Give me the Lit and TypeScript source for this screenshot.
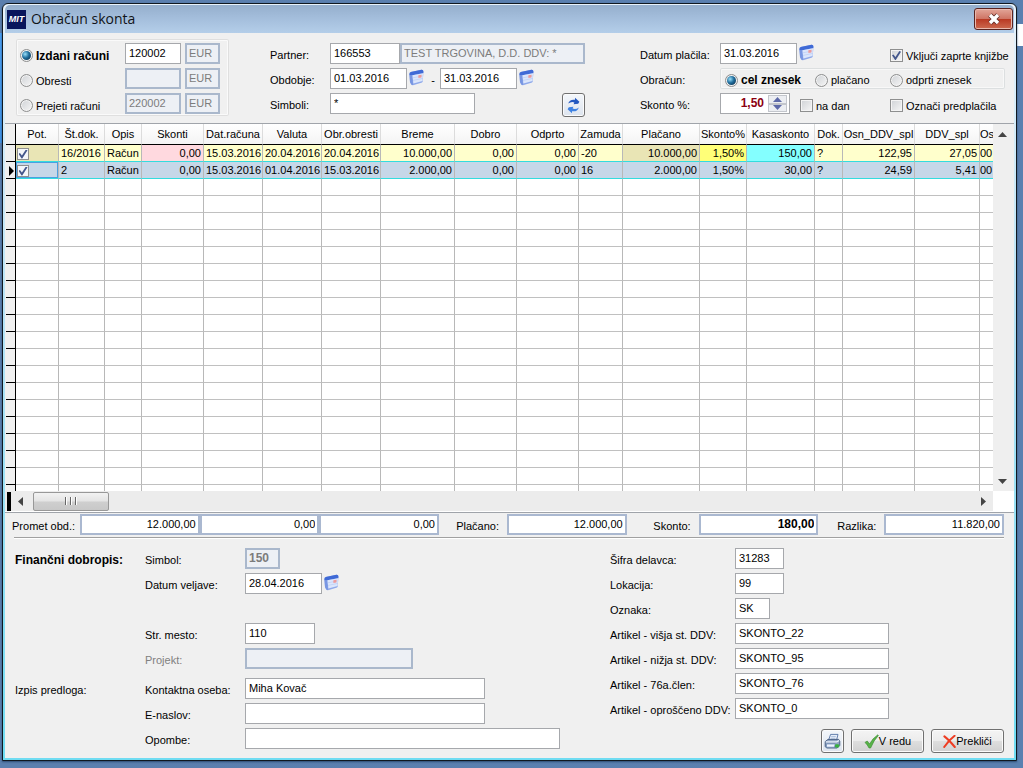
import { LitElement, html, svg, css, nothing } from "lit";
import { customElement, state } from "lit/decorators.js";
import { classMap } from "lit/directives/class-map.js";

type Align = "left" | "right";
interface Column {
  title: string;
  width: number;
  align: Align;
}
interface Entry {
  checked: boolean;
  cells: string[];
}

const COLUMNS: Column[] = [
  { title: "Št.dok.", width: 46, align: "left" },
  { title: "Opis", width: 37, align: "left" },
  { title: "Skonti", width: 62, align: "right" },
  { title: "Dat.računa", width: 59, align: "left" },
  { title: "Valuta", width: 59, align: "left" },
  { title: "Obr.obresti", width: 59, align: "left" },
  { title: "Breme", width: 74, align: "right" },
  { title: "Dobro", width: 62, align: "right" },
  { title: "Odprto", width: 62, align: "right" },
  { title: "Zamuda", width: 44, align: "left" },
  { title: "Plačano", width: 77, align: "right" },
  { title: "Skonto%", width: 47, align: "right" },
  { title: "Kasaskonto", width: 68, align: "right" },
  { title: "Dok.", width: 28, align: "left" },
  { title: "Osn_DDV_spl", width: 72, align: "right" },
  { title: "DDV_spl", width: 65, align: "right" },
];

const ENTRIES: Entry[] = [
  {
    checked: true,
    cells: ["16/2016", "Račun", "0,00", "15.03.2016", "20.04.2016", "20.04.2016", "10.000,00", "0,00", "0,00", "-20", "10.000,00", "1,50%", "150,00", "?", "122,95", "27,05", "00"],
  },
  {
    checked: true,
    cells: ["2", "Račun", "0,00", "15.03.2016", "01.04.2016", "15.03.2016", "2.000,00", "0,00", "0,00", "16", "2.000,00", "1,50%", "30,00", "?", "24,59", "5,41", "00"],
  },
];

const EMPTY_ROWS = 19;

const calendarIcon = html`<svg class="cal" viewBox="0 0 17 17" width="17" height="17" aria-hidden="true">
  <path d="M1.4 4.6 Q1.4 3.4 2.6 3.1 L13.4 .8 Q15.4 .6 15.4 2.6 L14.8 12.2 Q14.6 13.4 13.4 13.8 L5 16.2 Q3.6 16.4 3 15 L2 13Z" fill="#8fa9ea" />
  <path d="M1.4 5.6 Q1.4 3.6 2.8 3.1 L13.4 .8 Q15.4 .6 15.4 2.6 L15.3 4 L4.4 6.2 L1.6 6.6Z" fill="#3f6ad6" />
  <path d="M1.5 6.4 L4.2 6 L5 16.1 Q3.6 16.2 3 15 L2 13Z" fill="#7896e2" />
  <path d="M4.4 6.3 L15.2 4.2 L14.6 12 L5.4 14.4Z" fill="#dbe6fc" />
  <path d="M4.8 8.8 L15 6.8 M5 11.4 L14.8 9.4" stroke="#b4c8f4" stroke-width=".6" />
  <path d="M10.4 6.3 L13.6 5.7 L13.4 8.5 L10.4 9.1Z" fill="#ee9a9a" />
</svg>`;

const refreshIcon = svg`<svg viewBox="0 0 17 17" width="17" height="17" aria-hidden="true">
  <path d="M3.2 6.6 Q4.6 2 10 2.8 L10 .8 L14.4 4.8 L13.2 6.8 L8.6 7.2 L9.4 5.4 Q6 4.4 3.2 6.6Z" fill="#2358c0" />
  <path d="M13.8 10.4 Q12.4 15 7 14.2 L7 16.2 L2.6 12.2 L3.8 10.2 L8.4 9.8 L7.6 11.6 Q11 12.600 13.800 10.400Z" fill="#3f82e2" />
</svg>`;

const printerIcon = svg`<svg viewBox="0 0 17 17" width="17" height="17" aria-hidden="true">
  <path d="M4.6 7 L6.6 1.4 L14 1.4 L12.6 7Z" fill="#e8effa" stroke="#5573a4" stroke-width=".9" />
  <path d="M7.2 3.5 H11.8 M6.7 5.2 H11.2" stroke="#9ab2d4" stroke-width=".7" />
  <path d="M1.2 8.6 L4 6.4 H14.6 L15.8 8 V12.4 L13.2 15 H2.6 L1.2 13.4Z" fill="#8fa3c0" stroke="#42597e" stroke-width=".9" />
  <path d="M1.8 8.8 H12.8 L15.2 7.4" fill="none" stroke="#e9f0fa" stroke-width="1.2" />
  <path d="M2.6 11 H11.2 L10.4 14.2 H2.4Z" fill="#eef4ff" stroke="#5b7ba8" stroke-width=".6" />
  <rect x="11" y="11.2" width="4.2" height="3.2" rx="1.2" fill="#38b040" />
</svg>`;

const checkIcon = svg`<svg viewBox="0 0 15 15" width="15" height="15" aria-hidden="true">
  <path d="M1 8.4 L3.2 7 L5.6 10 Q8.4 4.4 13.8 .8 L14.4 1.4 Q9.6 6.6 6.6 14 L5 14 Q3.4 10.6 1 8.4Z" fill="#58b348" stroke="#3b8a31" stroke-width=".6" />
</svg>`;

const crossIcon = svg`<svg viewBox="0 0 13 13" width="13" height="13" aria-hidden="true">
  <path d="M1.4 1.4 Q6 5 11.8 12 M11.6 .8 Q5.6 5.4 1.2 12" fill="none" stroke="#ee3c22" stroke-width="2" stroke-linecap="round" />
</svg>`;

@customElement("app-root")
export class AppRoot extends LitElement {
  @state() private entries = ENTRIES;
  @state() private current = 1;

  static styles = css`
    * {
      box-sizing: border-box;
    }
    :host {
      display: flex;
      height: 100vh;
      min-height: 620px;
      padding: 3px 6px 7px 2px;
      box-sizing: border-box;
      font: 11px/13px "Liberation Sans", Arial, sans-serif;
      color: #000;
      background:
        linear-gradient(#fff, #fff) right 24px / 6px 22px no-repeat,
        linear-gradient(#4aa0f4, #3f92e6) 0 33px / 2px 110px no-repeat,
        linear-gradient(90deg, #5b7fae, #5a80b0);
    }
    input, button {
      font: inherit;
      color: inherit;
      margin: 0;
    }
    .window {
      flex: 1;
      min-width: 0;
      display: flex;
      flex-direction: column;
      border: 1px solid #101820;
      border-radius: 6px 6px 0 0;
      padding: 1px 2px 2px;
      background: linear-gradient(#e8f2fb, #b9e4f6 40%, #6fdcf2);
      box-shadow: 0 1px 2px #2d4c74;
    }
    .titlebar {
      display: flex;
      align-items: center;
      height: 28px;
      padding: 0 1px 0 2px;
      border-radius: 5px 5px 0 0;
      background: linear-gradient(#95afcd, #a3bddb 45%, #b4cee9);
    }
    .logo {
      width: 19px;
      height: 19px;
      background: #08155c;
      color: #fff;
      font: italic bold 9px/19px "Liberation Sans", sans-serif;
      text-align: center;
    }
    .title {
      flex: 1;
      margin: 0 0 0 5px;
      font: 14px/20px "Open Sans", "Noto Sans", sans-serif;
      color: #101418;
    }
    .close {
      display: grid;
      place-items: center;
      width: 39px;
      height: 22px;
      padding: 0;
      border: 1px solid #5b2420;
      border-radius: 3px;
      background: linear-gradient(#e2a598, #cf7565 48%, #b93a24 52%, #cd6a50);
      box-shadow: inset 0 0 0 1px #e9b9ae;
    }
    .body {
      flex: 1;
      min-height: 0;
      display: flex;
      flex-direction: column;
      background: #f0f0f0;
    }

    .filters {
      display: grid;
      grid-template-columns: 213px 1fr 374px;
      padding: 6px 0 7px 11px;
    }
    .stack {
      display: flex;
      flex-direction: column;
      gap: 4px;
      padding: 4px 0 2px;
    }
    .stack.middle {
      padding-left: 41px;
    }
    .stack.boxed {
      padding-left: 4px;
      box-shadow: inset 0 0 0 1px #dfdfdf, inset 0 0 0 2px #fafafa;
      border-radius: 2px;
    }
    .row {
      display: flex;
      height: 21px;
    }
    .accounts {
      display: grid;
      grid-template-columns: 105px 56px 35px;
      column-gap: 0;
    }
    .accounts input:last-child {
      margin-left: 4px;
      width: 35px;
    }
    .label {
      padding-top: 6px;
      white-space: nowrap;
    }
    .middle .label {
      width: 60px;
    }
    .right .label {
      width: 80px;
    }
    .muted {
      color: #808080;
    }
    .strong {
      font-weight: bold;
      font-size: 12px;
    }
    .field {
      width: 100%;
      height: 21px;
      padding: 0 3px 1px;
      border: 1px solid #a6a8ac;
      border-radius: 0;
      background: #fff;
      outline: none;
      min-width: 0;
    }
    .field:disabled {
      border: 2px solid #aab8cc;
      padding: 0 2px 1px;
      background: #edf0f5;
      color: #7c7c7c;
      opacity: 1;
    }
    .w35 { width: 35px; }
    .w49 { width: 49px; }
    .w70 { width: 70px; }
    .w77 { width: 77px; }
    .w145 { width: 145px; }
    .w154 { width: 154px; }
    .w168 { width: 168px; }
    .w185 { width: 185px; }
    .w240 { width: 240px; }
    .w315 { width: 315px; }
    .icon-button {
      width: 19px;
      height: 19px;
      padding: 0;
      border: 0;
      background: none;
      display: grid;
      place-items: center;
    }
    .dash {
      width: 14px;
      padding-top: 6px;
      text-align: center;
    }
    .push {
      flex: 1;
    }
    .middle .row {
      width: 315px;
    }
    .tool {
      display: flex;
      align-items: center;
      justify-content: center;
      height: 24px;
      padding: 0;
      border: 1px solid #707070;
      border-radius: 3px;
      background: linear-gradient(#f4f4f4, #ececec 48%, #dedede 52%, #d0d0d0);
      box-shadow: inset 0 0 0 1px #fbfbfb;
    }
    .tool.square {
      width: 23px;
      background: linear-gradient(#f4f7fb, #dde4ee);
    }
    .tool.wide {
      width: 73px;
    }

    .choice {
      display: flex;
      align-items: center;
      gap: 3px;
      padding-top: 4px;
      height: 21px;
      white-space: nowrap;
    }
    .choice label {
      padding-top: 1px;
    }
    .choice input {
      appearance: none;
      flex: none;
      width: 13px;
      height: 13px;
      border: 1px solid #8e8f8f;
      background: linear-gradient(135deg, #cfd2d6, #f6f6f6);
      box-shadow: inset 0 0 0 1px #f4f4f4;
      display: grid;
      place-items: center;
    }
    .choice input[type="radio"] {
      border-radius: 50%;
    }
    .choice input[type="radio"]:checked::before {
      content: "";
      width: 9px;
      height: 9px;
      border-radius: 50%;
      background: radial-gradient(circle at 35% 35%, #9be0fa, #1f6d9c 45%, #0d2f4c 90%);
    }
    input[type="checkbox"]:checked::before {
      content: "";
      width: 9px;
      height: 9px;
      background: #44578c;
      clip-path: polygon(0 48%, 16% 38%, 38% 66%, 82% 0, 100% 8%, 42% 100%, 34% 100%);
    }
    .split-date { display: grid; grid-template-columns: 170px 1fr; flex: 1; }
    .split-mode {
      display: grid;
      grid-template-columns: 95px 75px 1fr;
      flex: 1;
      margin: 0 9px 0 0;
      padding: 0;
      border: 0;
      box-shadow: inset 0 0 0 1px #dcdfe0, inset 0 0 0 2px #f8f8f8;
      border-radius: 2px;
    }
    .split-mode .choice { padding-top: 3px; }
    .split-mode .choice:first-child { padding-left: 5px; }
    .split-rate { display: grid; grid-template-columns: 80px 90px 1fr; flex: 1; }
    .pair { display: flex; }
    .spin {
      display: flex;
      width: 70px;
      height: 21px;
      padding: 1px 2px 1px 0;
      border: 1px solid #a6a8ac;
      background: #fff;
    }
    .spin input {
      flex: 1;
      min-width: 0;
      padding: 0 4px 0 0;
      border: 0;
      outline: none;
      background: none;
      text-align: right;
      font-weight: bold;
      font-size: 12px;
      color: #8b0010;
    }
    .spin-buttons {
      display: grid;
      grid-template-rows: 1fr 1fr;
      width: 19px;
    }
    .spin-buttons button {
      display: grid;
      place-items: center;
      padding: 0;
      border: 1px solid #c3c6cc;
      background: #eceef2;
    }

    .grid-area {
      flex: 1 1 0;
      min-height: 0;
      display: flex;
      border-top: 1px solid #a0a4aa;
      padding-left: 1px;
      overflow: hidden;
    }
    .grid-view {
      flex: 1;
      min-width: 0;
      overflow: hidden;
      background: #fff;
    }
    table {
      width: 100%;
      table-layout: fixed;
      border-collapse: separate;
      border-spacing: 0;
    }
    col.marker { width: 10px; }
    col.pick { width: 43px; }
    th {
      height: 21px;
      padding: 0;
      font-weight: normal;
      text-align: center;
      white-space: nowrap;
      overflow: hidden;
      background: linear-gradient(#fff, #f4f4f4);
      border-right: 1px solid #dcdcdc;
      border-bottom: 1px solid #000;
    }
    td {
      height: 17px;
      padding: 0 2px;
      line-height: 16px;
      white-space: nowrap;
      overflow: hidden;
      border-right: 1px solid #b8b8b8;
      border-bottom: 1px solid #c0c0c0;
    }
    td:last-child, th:last-child { border-right: 0; }
    .marker-cell {
      padding: 0;
      background: #f0f0f0;
      border-right: 1px solid #000;
      border-bottom: 1px solid #000;
    }
    .marker-cell svg { display: block; margin: 2px 0 0 3px; }
    .num { text-align: right; }
    .tail {
      padding: 0;
      text-align: left;
    }
    .pick-cell { padding: 0; }
    .pick-cell input {
      appearance: none;
      display: grid;
      place-items: center;
      width: 12px;
      height: 12px;
      margin: 2px 0 0 1px;
      border: 1px solid #8e8f8f;
      background: #f4f6fa;
    }
    .first td { background: #ffffcc; border-bottom-color: #33dcde; }
    .first .pick-cell, .first .c10 { background: #e9e5b5; }
    .first .c2 { background: #ffd9df; }
    .first .c11 { background: #ffff78; }
    .first .c12 { background: #84ffff; }
    .current td { background: #c6d7e8; border-bottom-color: #33dcde; }
    .current .pick-cell { box-shadow: inset 0 0 0 1px #4b9fe0; }
    .first .marker-cell, .current .marker-cell {
      background: #f0f0f0;
      border-bottom-color: #000;
    }
    .vscroll {
      width: 21px;
      display: flex;
      flex-direction: column;
      justify-content: space-between;
      align-items: center;
      padding: 5px 3px 5px 0;
      background: #efefef;
    }
    .vscroll button, .hscroll .arrow {
      display: grid;
      place-items: center;
      width: 10px;
      height: 10px;
      padding: 0;
      border: 0;
      background: none;
    }
    .hscroll {
      display: flex;
      align-items: center;
      height: 21px;
      margin-right: 21px;
      padding: 0 5px 0 2px;
      background: #ececec;
      border-right: 0;
      border-bottom: 1px solid #fff;
    }
    .hscroll-wrap { background: #fff; }
    .hstop { width: 4px; height: 19px; background: #000; }
    .hscroll .arrow.back { margin: 0 8px 0 4px; }
    .thumb {
      display: flex;
      justify-content: center;
      align-items: center;
      gap: 3px;
      width: 76px;
      height: 19px;
      border: 1px solid #989898;
      border-radius: 2px;
      background: linear-gradient(#f2f2f2, #e4e4e4 48%, #cfcfcf 52%, #c8c8c8);
    }
    .thumb i { width: 2px; height: 8px; border-left: 1px solid #666; background: #fff; }

    .totals {
      display: grid;
      grid-template-columns: 75px 3fr 68px 1fr 72px 1fr 66px 1fr;
      border-top: 1px solid #a0a4aa;
      padding: 1px 10px 2px 0;
    }
    .totals .label { text-align: right; padding-right: 8px; }
    .totals .label:first-child { padding-right: 5px; }
    .totals .field {
      border: 2px solid #aab8d0;
      text-align: right;
      padding-right: 2px;
    }
    .triple { display: grid; grid-template-columns: repeat(3, 1fr); }
    .rule {
      height: 2px;
      margin: 0 10px 0 9px;
      border: 0;
      border-top: 1px solid #a0a0a0;
      border-bottom: 1px solid #fff;
    }

    .details {
      display: grid;
      grid-template-columns: 1fr 404px;
      padding: 9px 0 5px 10px;
    }
    .section {
      display: grid;
      grid-template-columns: 130px 1fr;
    }
    .section + .section { margin-top: 9px; }
    .lines { display: flex; flex-direction: column; gap: 4px; }
    .lines .label { width: 100px; }
    .lines.codes .label { width: 125px; }
    .apart { margin-top: 25px; }
    h2 { margin: 0; font: inherit; }
    h2.strong { font-weight: bold; font-size: 12px; }
    .side { display: flex; flex-direction: column; justify-content: space-between; gap: 10px; }
    .actions {
      display: flex;
      justify-content: flex-end;
      gap: 7px;
      padding-right: 10px;
    }
  `;

  private line(id: string, label: string, value: string, width: string, opts: { off?: boolean; bold?: boolean; date?: boolean; apart?: boolean; muted?: boolean } = {}) {
    return html`<div class=${classMap({ row: true, apart: !!opts.apart })}>
      <label class=${classMap({ label: true, muted: !!opts.muted })} for=${id}>${label}</label>
      <input id=${id} type="text" class=${classMap({ field: true, [width]: true, strong: !!opts.bold })} .value=${value} ?disabled=${!!opts.off} />
      ${opts.date ? html`<button class="icon-button" aria-label="Koledar">${calendarIcon}</button>` : nothing}
    </div>`;
  }

  private account(id: string, label: string, value: string, checked: boolean) {
    return html`<div class="row accounts">
      <div class="choice">
        <input type="radio" name="kind" id=${id} ?checked=${checked} />
        <label class=${classMap({ strong: checked })} for=${id}>${label}</label>
      </div>
      <input type="text" class="field" aria-label="${label} konto" .value=${value} ?disabled=${!checked} />
      <input type="text" class="field" aria-label="${label} valuta" value="EUR" disabled />
    </div>`;
  }

  private choice(type: string, id: string, label: string, checked: boolean, name = id) {
    return html`<div class="choice">
      <input type=${type} id=${id} name=${name} ?checked=${checked} />
      <label class=${classMap({ strong: checked && type === "radio" })} for=${id}>${label}</label>
    </div>`;
  }

  private renderEntry(entry: Entry, index: number) {
    const active = index === this.current;
    return html`<tr class=${classMap({ first: index === 0, current: active })} @click=${() => (this.current = index)}>
      <td class="marker-cell">
        ${active ? html`<svg width="6" height="10" viewBox="0 0 6 10" aria-hidden="true"><path d="M0 0 L5 5 L0 10Z" /></svg>` : nothing}
      </td>
      <td class="pick-cell"><input type="checkbox" aria-label="Pot. ${entry.cells[0]}" ?checked=${entry.checked} /></td>
      ${COLUMNS.map((c, i) => html`<td class=${classMap({ ["c" + i]: true, num: c.align === "right" })}>${entry.cells[i]}</td>`)}
      <td class="tail">${entry.cells[COLUMNS.length]}</td>
    </tr>`;
  }

  private arrow(path: string) {
    return html`<svg width="9" height="9" viewBox="0 0 9 9" aria-hidden="true"><path d=${path} fill="#444" /></svg>`;
  }

  render() {
    return html`<main class="window">
      <header class="titlebar">
        <span class="logo">MIT</span>
        <h1 class="title">Obračun skonta</h1>
        <button class="close" aria-label="Zapri">
          <svg width="14" height="12" viewBox="0 0 14 12" aria-hidden="true">
            <path d="M3 2 L11 10 M11 2 L3 10" stroke="#5c2a26" stroke-width="5" />
            <path d="M3 2 L11 10 M11 2 L3 10" stroke="#fff" stroke-width="3.4" />
          </svg>
        </button>
      </header>
      <div class="body">
        <div class="filters">
          <div class="stack boxed">
            ${this.account("izdani", "Izdani računi", "120002", true)}
            ${this.account("obresti", "Obresti", "", false)}
            ${this.account("prejeti", "Prejeti računi", "220002", false)}
          </div>
          <div class="stack middle">
            <div class="row">
              <label class="label" for="partner">Partner:</label>
              <input id="partner" type="text" class="field w70" value="166553" />
              <input type="text" class="field w185" aria-label="Naziv partnerja" value="TEST TRGOVINA, D.D. DDV: *" disabled />
            </div>
            <div class="row">
              <label class="label" for="od">Obdobje:</label>
              <input id="od" type="text" class="field w77" value="01.03.2016" />
              <button class="icon-button" aria-label="Koledar od">${calendarIcon}</button>
              <span class="dash">-</span>
              <input type="text" class="field w77" aria-label="Obdobje do" value="31.03.2016" />
              <button class="icon-button" aria-label="Koledar do">${calendarIcon}</button>
            </div>
            <div class="row">
              <label class="label" for="simboli">Simboli:</label>
              <input id="simboli" type="text" class="field w145" value="*" />
              <span class="push"></span>
              <button class="tool square" aria-label="Osveži">${refreshIcon}</button>
            </div>
          </div>
          <div class="stack right">
            <div class="row">
              <label class="label" for="placilo">Datum plačila:</label>
              <div class="split-date">
                <div class="pair">
                  <input id="placilo" type="text" class="field w77" value="31.03.2016" />
                  <button class="icon-button" aria-label="Koledar plačila">${calendarIcon}</button>
                </div>
                ${this.choice("checkbox", "zaprte", "Vključi zaprte knjižbe", true)}
              </div>
            </div>
            <div class="row">
              <span class="label" id="obracun">Obračun:</span>
              <div class="split-mode" role="radiogroup" aria-labelledby="obracun">
                ${this.choice("radio", "cel", "cel znesek", true, "mode")}
                ${this.choice("radio", "placano", "plačano", false, "mode")}
                ${this.choice("radio", "odprti", "odprti znesek", false, "mode")}
              </div>
            </div>
            <div class="row">
              <label class="label" for="skonto">Skonto %:</label>
              <div class="split-rate">
                <div class="spin">
                  <input id="skonto" type="text" value="1,50" />
                  <div class="spin-buttons">
                    <button aria-label="Povečaj"><svg width="9" height="5" viewBox="0 0 9 5"><path d="M0 5 L4.500 0 L9 5Z" fill="#5d69a8" /></svg></button>
                    <button aria-label="Zmanjšaj"><svg width="9" height="5" viewBox="0 0 9 5"><path d="M0 0 L4.500 5 L9 0Z" fill="#5d69a8" /></svg></button>
                  </div>
                </div>
                ${this.choice("checkbox", "nadan", "na dan", false)}
                ${this.choice("checkbox", "predplacila", "Označi predplačila", false)}
              </div>
            </div>
          </div>
        </div>

        <div class="grid-area">
          <div class="grid-view">
            <table>
              <colgroup>
                <col class="marker" />
                <col class="pick" />
                ${COLUMNS.map((c) => html`<col style="width:${c.width}px" />`)}
                <col />
              </colgroup>
              <thead>
                <tr>
                  <th class="marker-cell"></th>
                  <th>Pot.</th>
                  ${COLUMNS.map((c) => html`<th>${c.title}</th>`)}
                  <th>Os</th>
                </tr>
              </thead>
              <tbody>
                ${this.entries.map((e, i) => this.renderEntry(e, i))}
                ${Array.from({ length: EMPTY_ROWS }, () => html`<tr><td class="marker-cell"></td><td></td>${COLUMNS.map(() => html`<td></td>`)}<td></td></tr>`)}
              </tbody>
            </table>
          </div>
          <div class="vscroll">
            <button aria-label="Gor">${this.arrow("M0 7 L4.500 2 L9 7Z")}</button>
            <button aria-label="Dol">${this.arrow("M0 2 L4.500 7 L9 2Z")}</button>
          </div>
        </div>
        <div class="hscroll-wrap">
          <div class="hscroll">
            <span class="hstop"></span>
            <button class="arrow back" aria-label="Levo">${this.arrow("M7 0 L2 4.500 L7 9Z")}</button>
            <span class="thumb"><i></i><i></i><i></i></span>
            <span class="push"></span>
            <button class="arrow" aria-label="Desno">${this.arrow("M2 0 L7 4.500 L2 9Z")}</button>
          </div>
        </div>

        <div class="totals">
          <label class="label" for="promet">Promet obd.:</label>
          <div class="triple">
            <input id="promet" type="text" class="field" value="12.000,00" readonly />
            <input type="text" class="field" aria-label="Promet dobro" value="0,00" readonly />
            <input type="text" class="field" aria-label="Promet odprto" value="0,00" readonly />
          </div>
          <label class="label" for="splacano">Plačano:</label>
          <input id="splacano" type="text" class="field" value="12.000,00" readonly />
          <label class="label" for="sskonto">Skonto:</label>
          <input id="sskonto" type="text" class="field strong" value="180,00" readonly />
          <label class="label" for="razlika">Razlika:</label>
          <input id="razlika" type="text" class="field" value="11.820,00" readonly />
        </div>
        <hr class="rule" />

        <div class="details">
          <div>
            <section class="section">
              <h2 class="label strong">Finančni dobropis:</h2>
              <div class="lines">
                ${this.line("simbol", "Simbol:", "150", "w35", { off: true, bold: true })}
                ${this.line("veljava", "Datum veljave:", "28.04.2016", "w77", { date: true })}
                ${this.line("mesto", "Str. mesto:", "110", "w70", { apart: true })}
                ${this.line("projekt", "Projekt:", "", "w168", { off: true, muted: true })}
              </div>
            </section>
            <section class="section">
              <h2 class="label">Izpis predloga:</h2>
              <div class="lines">
                ${this.line("kontakt", "Kontaktna oseba:", "Miha Kovač", "w240")}
                ${this.line("naslov", "E-naslov:", "", "w240")}
                ${this.line("opombe", "Opombe:", "", "w315")}
              </div>
            </section>
          </div>
          <div class="side">
            <div class="lines codes">
              ${this.line("delavec", "Šifra delavca:", "31283", "w49")}
              ${this.line("lokacija", "Lokacija:", "99", "w49")}
              ${this.line("oznaka", "Oznaka:", "SK", "w35")}
              ${this.line("visja", "Artikel - višja st. DDV:", "SKONTO_22", "w154")}
              ${this.line("nizja", "Artikel - nižja st. DDV:", "SKONTO_95", "w154")}
              ${this.line("clen", "Artikel - 76a.člen:", "SKONTO_76", "w154")}
              ${this.line("oprosceno", "Artikel - oproščeno DDV:", "SKONTO_0", "w154")}
            </div>
            <div class="actions">
              <button class="tool square" aria-label="Natisni">${printerIcon}</button>
              <button class="tool wide">${checkIcon}V redu</button>
              <button class="tool wide">${crossIcon}Prekliči</button>
            </div>
          </div>
        </div>
      </div>
    </main>`;
  }
}
